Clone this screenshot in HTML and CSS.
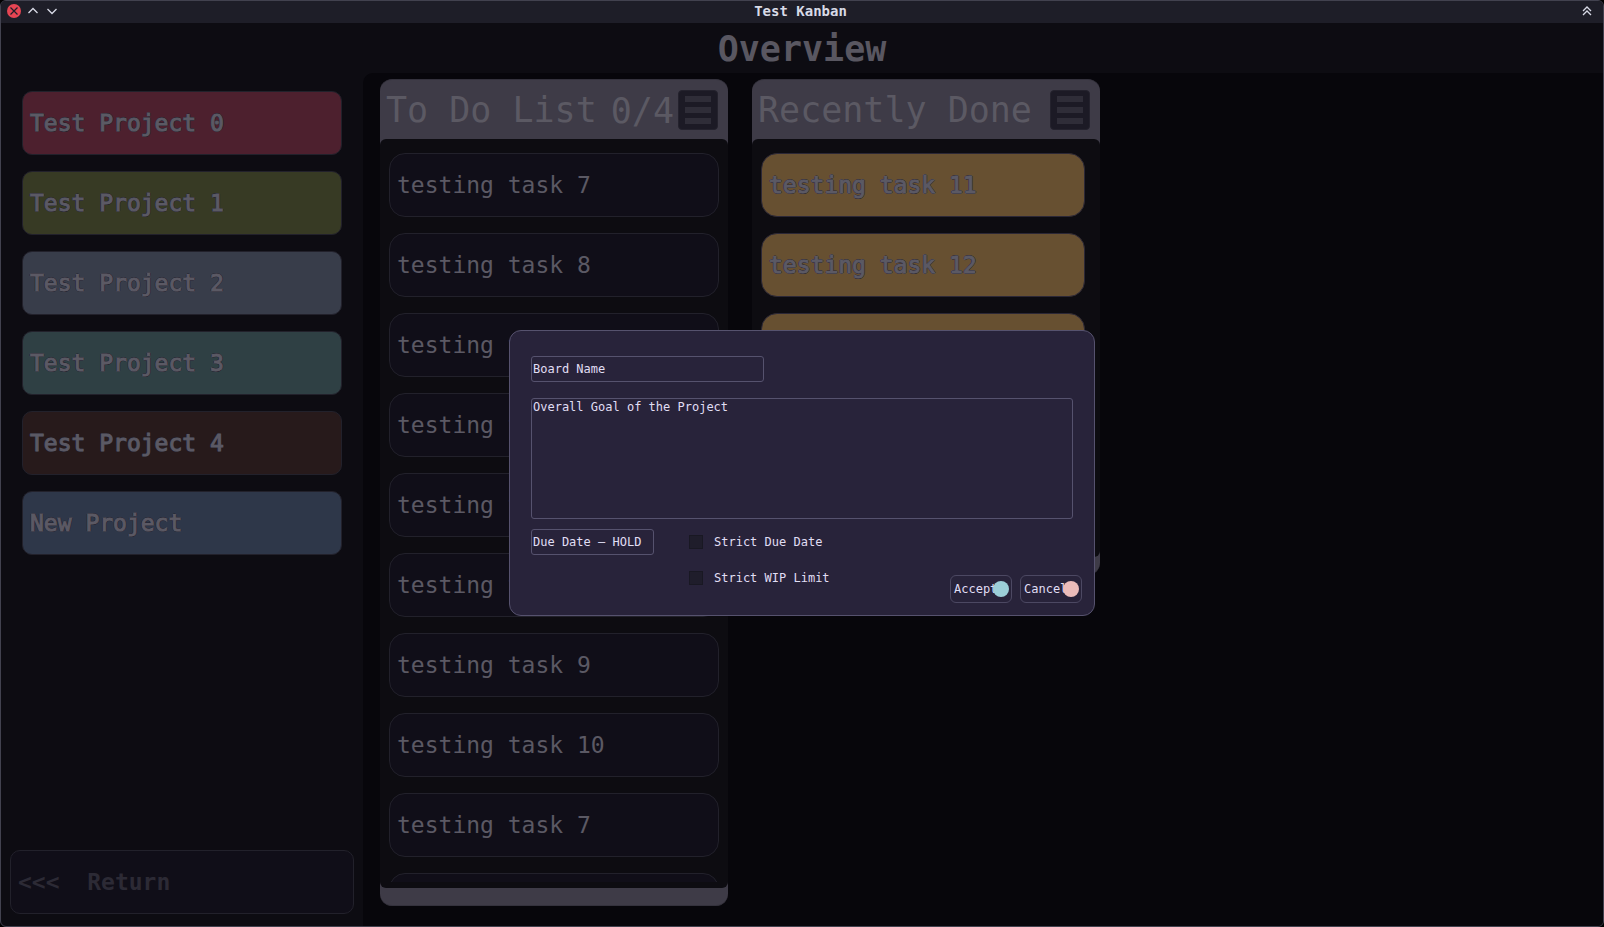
FILE: index.html
```html
<!DOCTYPE html>
<html lang="en">
<head>
<meta charset="utf-8">
<title>Test Kanban</title>
<link rel="stylesheet" href="styles.css">
</head>
<body>
<div class="window">
  <div class="titlebar">
    <div class="controls">
      <button class="control" aria-label="Close"><svg width="14" height="14" viewBox="0 0 14 14"><circle cx="7" cy="7" r="7" fill="#e64553"/><path d="M3.500 3.500l7 7M10.500 3.500l-7 7" stroke="#1e1e28" stroke-width="1.200"/></svg></button>
      <button class="control" aria-label="Maximize"><svg width="14" height="14" viewBox="0 0 14 14"><path d="M2.500 9L7 4.500L11.500 9" fill="none" stroke="#d8dae6" stroke-width="1.300"/></svg></button>
      <button class="control" aria-label="Minimize"><svg width="14" height="14" viewBox="0 0 14 14"><path d="M2.500 5L7 9.500L11.500 5" fill="none" stroke="#d8dae6" stroke-width="1.300"/></svg></button>
    </div>
    <div class="window-title">Test Kanban</div>
    <div class="controls controls-end">
      <button class="control" aria-label="Shade"><svg width="14" height="14" viewBox="0 0 14 14"><path d="M3 7L7 3L11 7M3 11L7 7L11 11" fill="none" stroke="#d8dae6" stroke-width="1.300"/></svg></button>
    </div>
  </div>
  <header class="header"><h1>Overview</h1></header>
  <div class="main">
    <nav class="sidebar">
      <div class="projects">
        <button class="project red">Test Project 0</button>
        <button class="project olive">Test Project 1</button>
        <button class="project slate">Test Project 2</button>
        <button class="project teal">Test Project 3</button>
        <button class="project brown">Test Project 4</button>
        <button class="project blue">New Project</button>
      </div>
      <button class="return">&lt;&lt;&lt;  Return</button>
    </nav>
    <main class="board">
      <section class="column tall">
        <div class="column-head">
          <h2>To Do List</h2><span class="count">0/4</span>
          <button class="menu" aria-label="List menu"><i></i><i></i><i></i></button>
        </div>
        <div class="column-body">
          <div class="tasks">
            <button class="task">testing task 7</button>
            <button class="task">testing task 8</button>
            <button class="task">testing task 9</button>
            <button class="task">testing task 10</button>
            <button class="task">testing task 7</button>
            <button class="task">testing task 8</button>
            <button class="task">testing task 9</button>
            <button class="task">testing task 10</button>
            <button class="task">testing task 7</button>
            <button class="task" aria-label="Next task"></button>
          </div>
        </div>
      </section>
      <section class="column">
        <div class="column-head">
          <h2>Recently Done</h2>
          <button class="menu" aria-label="List menu"><i></i><i></i><i></i></button>
        </div>
        <div class="column-body">
          <div class="tasks narrow">
            <button class="task done">testing task 11</button>
            <button class="task done">testing task 12</button>
            <button class="task done">testing task 13</button>
            <button class="task done">testing task 14</button>
            <button class="task done">testing task 15</button>
          </div>
        </div>
      </section>
    </main>
  </div>
  <form class="dialog" role="dialog" aria-label="New project">
    <input class="field name" type="text" value="Board Name" aria-label="Board Name">
    <textarea class="field goal" aria-label="Overall Goal of the Project">Overall Goal of the Project</textarea>
    <div class="options">
      <input class="field due" type="text" value="Due Date – HOLD" aria-label="Due Date">
      <div class="checks">
        <label class="check"><input type="checkbox">Strict Due Date</label>
        <label class="check"><input type="checkbox">Strict WIP Limit</label>
      </div>
      <div class="actions">
        <button type="button" class="action accept">Accept</button>
        <button type="button" class="action cancel">Cancel</button>
      </div>
    </div>
  </form>
</div>
</body>
</html>
```
FILE: styles.css
```css
* { box-sizing: border-box; }

body {
  margin: 0;
  background: #000;
  font-family: "DejaVu Sans Mono", "Liberation Mono", monospace;
}

button, input, textarea { font: inherit; }

.window {
  position: relative;
  display: flex;
  flex-direction: column;
  height: 100vh;
  overflow: hidden;
  border: 1px solid #42424f;
  border-radius: 6px;
  background: #0d0c12;
}

.titlebar {
  flex: none;
  display: grid;
  grid-template-columns: 1fr auto 1fr;
  align-items: center;
  height: 22px;
  padding: 0 9px 2px 6px;
  background: #1e1e28;
}

.controls { display: flex; gap: 5px; }
.controls-end { justify-content: flex-end; }

.control {
  display: flex;
  padding: 0;
  border: 0;
  background: none;
}

.window-title {
  color: #d8dae6;
  font-size: 14px;
  font-weight: bold;
  line-height: 20px;
}

.header {
  flex: none;
  display: flex;
  align-items: center;
  justify-content: center;
  height: 50px;
  padding-top: 2px;
}

h1, h2 { margin: 0; font-size: 35px; line-height: 40px; }
h1 { color: #595761; }
h2 { font-weight: normal; white-space: nowrap; }

.main { flex: 1; display: flex; min-height: 0; }

.sidebar {
  flex: none;
  display: flex;
  flex-direction: column;
  justify-content: space-between;
  width: 362px;
  padding: 18px 9px 12px;
}

.projects {
  display: flex;
  flex-direction: column;
  gap: 16px;
  padding: 0 12px;
}

.project, .return, .task {
  flex: none;
  height: 64px;
  padding: 0 7px;
  border: 1px solid #22212b;
  font-size: 23px;
  text-align: left;
  color: #5b5964;
  background: #100e18;
}

.project {
  border-radius: 10px;
  -webkit-text-stroke: 1px #5b5964;
  text-shadow: 1px 0 #22212d, -1px 0 #22212d, 0 1px #22212d, 0 -1px #22212d;
}

.red { background: #4d202e; }
.olive { background: #373a24; }
.slate { background: #383d4a; }
.teal { background: #2f4044; }
.brown { background: #271a1b; }
.blue { background: #2e3749; }

.return {
  border-radius: 10px;
  color: #2c2a35;
  font-weight: bold;
  white-space: pre;
}

.board {
  flex: 1;
  display: flex;
  align-items: flex-start;
  gap: 24px;
  min-width: 0;
  padding: 6px 17px 20px;
  border-radius: 10px 0 0 0;
  background: #07060b;
}

.column {
  flex: none;
  display: flex;
  flex-direction: column;
  width: 348px;
  max-height: 100%;
  padding: 0 0 17px;
  border: 1px solid #34323d;
  border-width: 1px 0;
  border-radius: 12px;
  background: #3e3b47;
}

.tall { height: 100%; }

.column-head {
  flex: none;
  display: flex;
  align-items: center;
  height: 59px;
  padding: 0 10px 0 6px;
  color: #5b5963;
}

.count { margin-left: auto; font-size: 35px; line-height: 40px; padding-top: 2px; }

.menu {
  display: flex;
  flex-direction: column;
  justify-content: center;
  gap: 5px;
  width: 40px;
  height: 40px;
  margin-left: auto;
  padding: 0 6px;
  border: 1px solid #24222d;
  border-radius: 4px;
  background: #1c1a25;
}

.count + .menu { margin-left: 4px; }
.menu i { height: 6px; background: #2f2d38; }

.column-body {
  flex: 1;
  min-height: 0;
  padding: 14px 9px 6px;
  border-radius: 6px;
  background: #0d0c11;
}

.tasks {
  display: flex;
  flex-direction: column;
  gap: 16px;
  height: 100%;
  overflow: hidden;
}

.narrow { padding: 0 6px 14px 0; }
.task { border-radius: 16px; }

.done {
  border-color: #2c2836;
  background: #675031;
  -webkit-text-stroke: 1px #5b5964;
  text-shadow: 1px 0 #2c2836, -1px 0 #2c2836, 0 1px #2c2836, 0 -1px #2c2836;
}

.dialog {
  position: absolute;
  left: 508px;
  top: 329px;
  display: flex;
  flex-direction: column;
  align-items: flex-start;
  width: 586px;
  padding: 25px 12px 12px 21px;
  border: 1px solid #56526e;
  border-radius: 12px;
  background: #28233a;
  color: #e0def4;
  font-size: 12px;
}

.field {
  height: 26px;
  padding: 0 1px;
  border: 1px solid #56526e;
  border-radius: 3px;
  outline: 0;
  background: none;
  color: inherit;
}

.name { width: 233px; }

.goal {
  width: 542px;
  height: 121px;
  margin: 16px 0 10px;
  line-height: 16px;
  resize: none;
}

.options { display: flex; width: 100%; }
.due { width: 123px; }

.checks {
  display: flex;
  flex-direction: column;
  gap: 22px;
  margin: 6px 0 0 35px;
}

.check { display: flex; align-items: center; gap: 11px; height: 14px; }

.check input {
  appearance: none;
  width: 14px;
  height: 14px;
  margin: 0;
  border: 1px solid #191823;
  background: #1f1d2b;
}

.actions {
  display: flex;
  align-items: flex-end;
  gap: 8px;
  margin-left: auto;
  padding-top: 46px;
}

.action {
  position: relative;
  width: 62px;
  height: 28px;
  padding: 0 3px;
  border: 1px solid #4c4862;
  border-radius: 6px;
  background: none;
  color: inherit;
  text-align: left;
}

.action::after {
  content: "";
  position: absolute;
  right: 2px;
  top: 5px;
  width: 16px;
  height: 16px;
  border-radius: 50%;
}

.accept::after { background: #9ccfd8; }
.cancel::after { background: #ebbcba; }
```
